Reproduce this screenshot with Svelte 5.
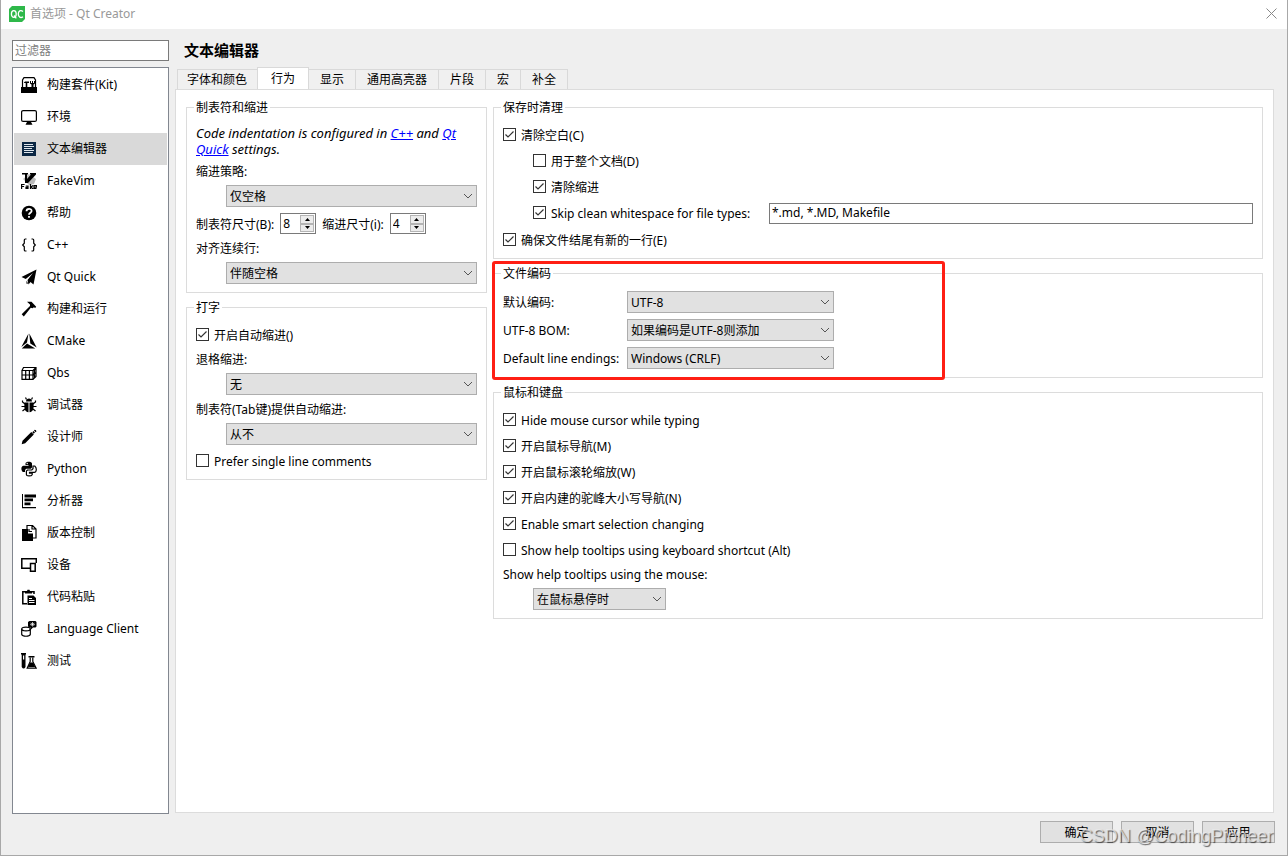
<script>
    const categories = [
        { icon: "kit", name: "构建套件(Kit)" },
        { icon: "screen", name: "环境" },
        { icon: "text", name: "文本编辑器" },
        { icon: "vim", name: "FakeVim" },
        { icon: "help", name: "帮助" },
        { icon: "braces", name: "C++" },
        { icon: "plane", name: "Qt Quick" },
        { icon: "hammer", name: "构建和运行" },
        { icon: "cmake", name: "CMake" },
        { icon: "qbs", name: "Qbs" },
        { icon: "bug", name: "调试器" },
        { icon: "pencil", name: "设计师" },
        { icon: "python", name: "Python" },
        { icon: "analyzer", name: "分析器" },
        { icon: "vcs", name: "版本控制" },
        { icon: "devices", name: "设备" },
        { icon: "paste", name: "代码粘贴" },
        { icon: "client", name: "Language Client" },
        { icon: "flask", name: "测试" },
    ];
    const tabs = ["字体和颜色", "行为", "显示", "通用高亮器", "片段", "宏", "补全"];

    let current = $state(2);
    let tab = $state(1);
    let tabSize = $state(8);
    let indentSize = $state(4);
</script>

{#snippet check(text, checked)}
    <label class="check">
        <span class="tick">
            <input type="checkbox" {checked} />
            <svg viewBox="0 0 13 13"><path d="M2.5 6.5 L5 9 L10.5 3.5" /></svg>
        </span>
        {text}
    </label>
{/snippet}

{#snippet combo(id, options)}
    <span class="combo">
        <select {id}>
            {#each options as option}
                <option>{option}</option>
            {/each}
        </select>
        <svg viewBox="0 0 10 6"><path d="M1 1 L5 5 L9 1" /></svg>
    </span>
{/snippet}

{#snippet arrows(step)}
    <span class="arrows">
        <button aria-label="+" onclick={() => step(1)}><svg viewBox="0 0 5 3"><path d="M0 3 L2.5 0 L5 3Z" /></svg></button>
        <button aria-label="-" onclick={() => step(-1)}><svg viewBox="0 0 5 3"><path d="M0 0 L2.5 3 L5 0Z" /></svg></button>
    </span>
{/snippet}

{#snippet glyph(icon)}
    <svg class="icon" viewBox="0 0 16 16" aria-hidden="true">
        {#if icon == "kit"}
            <path class="line" d="M1.500 11V3L3 .6h10L14.500 3v8" />
            <path d="M0 10h16v6H0zM3 5.500l1-1h4V6H6.300v4H4.700V6H3zM9 4h1v2h1V4h1v2h1V4h1v2.500L12.500 7.500V10h-2V7.500L9 6.500z" />
        {:else if icon == "screen"}
            <rect class="line" x=".6" y="1.600" width="14.800" height="10.800" rx="1.500" />
            <path d="M6 13h4l1.500 2.800h-7z" />
        {:else if icon == "text"}
            <path fill="#0b2744" d="M1 1h14v14H1z" />
            <path stroke="#dfe6ec" d="M3 3.500h9M3 5.500h10M3 7.500h8M3 9.500h10M3 11.500h9" />
        {:else if icon == "vim"}
            <path fill="#bbb" d="M8 1l7 5-2 5-5 1-6-6z" />
            <path d="M1 0h6v1.500H6V6l4-4.500H9V0h6v1.500L7 10H4V1.500H1z" />
            <path class="line" d="M.6 16v-4.500h3M.6 13.500h2.500M4.800 13h2.200v2.500H5V14.300h2M9.500 11v5M12 12.500l-2 1.500 2 2M13 14.200h2.400v-1.700H13v3h2.500" />
        {:else if icon == "help"}
            <circle cx="8" cy="8" r="7.300" />
            <path fill="none" stroke="#fff" stroke-width="1.800" d="M5.500 6.300C5.500 3 10.700 3.200 10.600 6c0 1.700-2.600 1.700-2.600 3.800M8 11v1.800" />
        {:else if icon == "braces"}
            <path class="line" d="M5.500 2H4.300Q3.300 2 3.300 3v3.200L1.700 8l1.600 1.800V13q0 1 1 1h1.200M10.500 2h1.200q1 0 1 1v3.200L14.300 8l-1.600 1.800V13q0 1-1 1h-1.200" />
        {:else if icon == "plane"}
            <path d="M15.500.5L.5 8l4.300 2L12 4 6.500 11l1 4.500 2-2.600 3 2.600zM5.500 11.700v3l1.600-.2z" />
        {:else if icon == "hammer"}
            <path d="M6 .8h4.500l4.700 5-1 1.200-1.300-.8-1.300 1L9.800 6.800 2.800 15.500.7 13.300 9 5V3.500z" />
        {:else if icon == "cmake"}
            <path d="M7.500.5L.3 14 6 9.600zM8.300.5l1 10 6.400 4zM6 10.500L.8 15.500h13.500z" />
        {:else if icon == "qbs"}
            <path class="line" d="M1 5.500h11v8.900H1zM1 5.500l1.500-3h12.500V11.500L12 14.400M12 5.500l3-3M1 10h11M4.700 14V5.500M8.400 14V5.500M13.500 4v9M12 10l3-2.500" />
        {:else if icon == "bug"}
            <path d="M5 4.500C5 .5 11 .5 11 4.500zM3.500 5.500h4v9.700C3.500 15 3 11 3.500 5.500zM8.500 5.500h4c.5 5.500 0 9.500-4 9.700z" />
            <path class="line" d="M5.500 2.500L4.500 .5M10.500 2.500l1-2M4 7L1.500 5V3.500M12 7l2.500-2V3.500M4 9.500H.5M12 9.500h3.500M4 12l-2.500 2M12 12l2.500 2" />
        {:else if icon == "pencil"}
            <path d="M.7 15.300l.8-3.500L10.300 3l2.500 2.500-8.600 8.800zM11.300 3.200l1.200-1.200L14 3.500 12.700 4.700zM13 1.500l.7-.8q1.800.2 1.700 1.700l-.8.8z" />
        {:else if icon == "python"}
            <path d="M4.500 2.500C4.500 0 11 0 11 2.500v4L9.800 7.700H5.300L4 9v2H2C-.6 9 .2 4.700 2.500 4.700h5V4h-3z" />
            <circle cx="6.200" cy="2.500" r=".7" fill="#fff" />
            <path class="line" d="M12 5h1.700c2.500 2 1.800 6.400-.5 6.400H8.500v.8h2.700v1.500c-1 1.700-5.700 1.700-5.800-.2V10l1.100-1h4.300L12 7.700z" />
        {:else if icon == "analyzer"}
            <path d="M1 1h1v13h13v1.200H1zM3.500 1.500H15v3H3.500zM3.500 5.500h8.500v2.700H3.500zM3.500 9.500h6v2.800h-6z" />
        {:else if icon == "vcs"}
            <path d="M1 4h6v4.500h5V16H1z" />
            <path class="line" d="M6 6.500v-6h5.500l3.500 3.500v9h-3M11 .5V4h4M8 4v2.500h3" />
        {:else if icon == "devices"}
            <path class="line wide" d="M9 11.200H.8V1.800h14.500V6M9.500 6.500h4.700v7.700H9.500z" />
        {:else if icon == "paste"}
            <path class="line wide" d="M6 14.800H1.800v-12H13V5" />
            <path d="M4 4.500V2h2L6.500.7h2L9 2h2v2.500zM6.500 6.500h6l2.500 2.500V16H6.500z" />
            <path stroke="#fff" d="M8 9.500h3M8 11.500h5.500M8 13.500h5.500" />
        {:else if icon == "client"}
            <ellipse class="line" cx="5" cy="8" rx="4.300" ry="1.900" />
            <path class="line" d="M.7 8v5.500c1 2.300 7.600 2.300 8.600 0V8" />
            <path d="M8.500 0h6l1 1v4.500l-1 1H12L9.500 9V6.500H8.300L7 5.500V1z" />
            <path stroke="#fff" stroke-width=".7" fill="none" d="M9 3.300h5M11.500 1v4.500M10 1.800l3 3M13 1.800l-3 3" />
        {:else}
            <path d="M0 0h5v1.500H0zM.7 1.500h3.800V14q-1.900 3-3.800 0zM7.500 3h6v1.400h-6z" />
            <path fill="#fff" d="M2 2.500h1.200v4H2z" />
            <path class="line" d="M9.200 4.400v4L6.200 15.200h9L11.800 8.400v-4" />
            <path d="M9 9.500h3.200l2 4.500H7z" />
        {/if}
    </svg>
{/snippet}

<div class="window">
    <header>
        <svg class="logo" viewBox="0 0 16 16" aria-hidden="true">
            <path fill="#2eb84a" d="M3 0h13v13l-3 3H0V3z" />
            <g fill="none" stroke="#fff" stroke-width="1.300">
                <ellipse cx="4.800" cy="8" rx="2.400" ry="3.300" />
                <path d="M5 9.500l2.300 2.800M14 5.500C11.500 3.500 9.300 5 9.300 8s2.200 4.500 4.700 2.700" />
            </g>
        </svg>
        <span>首选项 - Qt Creator</span>
        <button class="close" aria-label="关闭"><svg viewBox="0 0 11 11"><path d="M.5 .5l10 10M10.500 .5l-10 10" /></svg></button>
    </header>

    <div class="body">
        <aside>
            <input class="field filter" type="text" placeholder="过滤器" aria-label="过滤器" />
            <nav>
                {#each categories as category, i}
                    <button class:selected={i == current} onclick={() => current = i}>
                        {@render glyph(category.icon)}
                        {category.name}
                    </button>
                {/each}
            </nav>
        </aside>

        <main>
            <h1>文本编辑器</h1>
            <div class="tabs" role="tablist">
                {#each tabs as name, i}
                    <button role="tab" aria-selected={i == tab} class:active={i == tab} onclick={() => tab = i}>{name}</button>
                {/each}
            </div>

            <div class="pane">
                <div class="column narrow">
                    <fieldset>
                        <legend>制表符和缩进</legend>
                        <p>Code indentation is configured in <a href="#cpp">C++</a> and <a href="#quick">Qt Quick</a> settings.</p>
                        <label for="policy">缩进策略:</label>
                        <div class="indent">{@render combo("policy", ["仅空格", "仅制表符", "混合"])}</div>
                        <div class="row">
                            <label for="tab-size">制表符尺寸(B):</label>
                            <span class="spin">
                                <input id="tab-size" type="number" bind:value={tabSize} />
                                {@render arrows((n) => tabSize += n)}
                            </span>
                            <label for="indent-size">缩进尺寸(i):</label>
                            <span class="spin">
                                <input id="indent-size" type="number" bind:value={indentSize} />
                                {@render arrows((n) => indentSize += n)}
                            </span>
                        </div>
                        <label for="align">对齐连续行:</label>
                        <div class="indent">{@render combo("align", ["伴随空格", "从不"])}</div>
                    </fieldset>

                    <fieldset>
                        <legend>打字</legend>
                        {@render check("开启自动缩进()", true)}
                        <label for="backspace">退格缩进:</label>
                        <div class="indent">{@render combo("backspace", ["无"])}</div>
                        <label for="tab-key">制表符(Tab键)提供自动缩进:</label>
                        <div class="indent">{@render combo("tab-key", ["从不", "总是"])}</div>
                        {@render check("Prefer single line comments", false)}
                    </fieldset>
                </div>

                <div class="column">
                    <fieldset>
                        <legend>保存时清理</legend>
                        {@render check("清除空白(C)", true)}
                        <div class="indent">{@render check("用于整个文档(D)", false)}</div>
                        <div class="indent">{@render check("清除缩进", true)}</div>
                        <div class="indent types">
                            {@render check("Skip clean whitespace for file types:", true)}
                            <input class="field" type="text" value="*.md, *.MD, Makefile" aria-label="Skip clean whitespace for file types" />
                        </div>
                        {@render check("确保文件结尾有新的一行(E)", true)}
                    </fieldset>

                    <div class="marked">
                        <fieldset>
                            <legend>文件编码</legend>
                            <div class="form">
                                <label for="encoding">默认编码:</label>
                                {@render combo("encoding", ["UTF-8", "GBK"])}
                                <label for="bom">UTF-8 BOM:</label>
                                {@render combo("bom", ["如果编码是UTF-8则添加"])}
                                <label for="endings">Default line endings:</label>
                                {@render combo("endings", ["Windows (CRLF)", "Unix (LF)"])}
                            </div>
                        </fieldset>
                        <div class="highlight"></div>
                    </div>

                    <fieldset>
                        <legend>鼠标和键盘</legend>
                        {@render check("Hide mouse cursor while typing", true)}
                        {@render check("开启鼠标导航(M)", true)}
                        {@render check("开启鼠标滚轮缩放(W)", true)}
                        {@render check("开启内建的驼峰大小写导航(N)", true)}
                        {@render check("Enable smart selection changing", true)}
                        {@render check("Show help tooltips using keyboard shortcut (Alt)", false)}
                        <label for="tooltips">Show help tooltips using the mouse:</label>
                        <div class="indent short">{@render combo("tooltips", ["在鼠标悬停时"])}</div>
                    </fieldset>
                </div>
            </div>
        </main>
    </div>

    <footer>
        <button>确定</button>
        <button>取消</button>
        <button>应用</button>
        <span class="watermark">CSDN @CodingPioneer</span>
    </footer>
</div>

<style>
    :global(body) {
        font-family: "Noto Sans", "Noto Sans CJK SC", sans-serif;
        font-size: 12px;
        line-height: 16px;
        color: #000;
    }

    .window, .window * {
        box-sizing: border-box;
    }

    .window {
        display: flex;
        flex-direction: column;
        min-height: 100vh;
        background: #efefef;
        border: 1px solid #a8a8a8;
        border-top: none;
    }

    button, input, select {
        font: inherit;
        color: inherit;
        margin: 0;
        border-radius: 0;
        outline: none;
    }

    header {
        display: flex;
        align-items: center;
        gap: 5px;
        height: 29px;
        padding: 0 10px 2px 8px;
        background: #fff;
        color: #999;
    }

    .logo {
        width: 16px;
        height: 16px;
    }

    .close {
        display: flex;
        margin-left: auto;
        padding: 0;
        border: none;
        background: none;
    }

    .close svg {
        width: 11px;
        height: 11px;
        fill: none;
        stroke: #888;
    }

    .body {
        flex: 1;
        display: flex;
        gap: 6px;
        padding: 11px 13px 0 11px;
    }

    aside {
        flex: 0 0 157px;
        display: flex;
        flex-direction: column;
        gap: 6px;
    }

    .field {
        width: 100%;
        height: 21px;
        padding: 0 2px 2px;
        border: 1px solid #7a7a7a;
        background: #fff;
    }

    .filter {
        padding: 0 2px;
    }

    .field::placeholder {
        color: #808080;
    }

    nav {
        flex: 1;
        padding: 1px;
        border: 1px solid #828790;
        background: #fff;
    }

    nav button {
        display: flex;
        align-items: center;
        gap: 10px;
        width: 100%;
        height: 32px;
        padding: 0 7px;
        border: none;
        background: none;
        white-space: nowrap;
    }

    nav button.selected {
        background: #d9d9d9;
    }

    .icon {
        flex: none;
        width: 16px;
        height: 16px;
    }

    .icon .line {
        fill: none;
        stroke: #000;
        stroke-width: 1.2;
    }

    .icon .wide {
        stroke-width: 1.5;
    }

    main {
        flex: 1;
        min-width: 0;
        display: flex;
        flex-direction: column;
        padding-bottom: 1px;
    }

    h1 {
        margin: 0;
        padding: 0 9px;
        font-size: 15px;
        line-height: 20px;
    }

    .tabs {
        display: flex;
        align-items: flex-end;
        padding: 7px 2px 0;
        margin-bottom: -1px;
    }

    .tabs button {
        height: 21px;
        padding: 0 11px;
        border: 1px solid #d9d9d9;
        border-left: none;
        background: #f0f0f0;
    }

    .tabs button:first-child {
        padding: 0 10px 0 9px;
        border-left: 1px solid #d9d9d9;
        border-right: none;
    }

    .tabs button.active {
        height: 23px;
        padding: 0 13px;
        border-left: 1px solid #d9d9d9;
        border-bottom-color: #fff;
        background: #fff;
    }

    .pane {
        flex: 1;
        display: flex;
        align-items: flex-start;
        gap: 6px;
        padding: 9px 10px;
        border: 1px solid #dcdcdc;
        background: #fff;
    }

    .column {
        flex: 1;
        min-width: 0;
        display: flex;
        flex-direction: column;
        gap: 6px;
    }

    .column.narrow {
        flex: 0 0 301px;
    }

    fieldset {
        display: flex;
        flex-direction: column;
        gap: 6px;
        min-width: 0;
        margin: 0;
        padding: 9px 9px 8px;
        border: 1px solid #dcdcdc;
    }

    legend {
        height: 17px;
        margin-left: -2px;
        padding: 0 2px;
        line-height: 18px;
    }

    label {
        height: 16px;
        line-height: 18px;
    }

    p {
        margin: 0;
        font-size: 13px;
        font-style: italic;
    }

    a {
        color: #00f;
    }

    .indent {
        margin-left: 30px;
    }

    .short {
        width: 133px;
    }

    .row {
        display: flex;
        align-items: center;
        gap: 6px;
        white-space: nowrap;
    }

    .types {
        display: grid;
        grid-template-columns: 226px 1fr;
        gap: 10px;
        white-space: nowrap;
    }

    .check {
        display: flex;
        align-items: flex-start;
        gap: 5px;
        height: 20px;
        padding-top: 3px;
        line-height: 16px;
    }

    .tick {
        position: relative;
        width: 13px;
        height: 13px;
    }

    .tick input {
        display: block;
        appearance: none;
        width: 13px;
        height: 13px;
        border: 1px solid #333;
        background: #fff;
    }

    .tick svg {
        position: absolute;
        inset: 0;
        fill: none;
        stroke: #333;
        stroke-width: 1.2;
        pointer-events: none;
        visibility: hidden;
    }

    .tick input:checked + svg {
        visibility: visible;
    }

    .combo {
        position: relative;
        display: block;
    }

    .combo select {
        display: block;
        appearance: none;
        width: 100%;
        height: 22px;
        padding: 2px 20px 0 3px;
        border: 1px solid #adadad;
        background: #e1e1e1;
    }

    .combo svg {
        position: absolute;
        right: 4px;
        top: 8px;
        width: 10px;
        height: 6px;
        fill: none;
        stroke: #555;
        pointer-events: none;
    }

    .spin {
        display: flex;
        width: 36px;
        height: 21px;
        padding: 1px;
        border: 1px solid #7a7a7a;
        background: #fff;
    }

    .spin input {
        flex: 1;
        min-width: 0;
        padding: 0 1px;
        border: none;
        appearance: textfield;
    }

    .spin input::-webkit-inner-spin-button {
        display: none;
    }

    .arrows {
        display: flex;
        flex-direction: column;
        width: 14px;
    }

    .arrows button {
        flex: 1;
        display: flex;
        align-items: center;
        justify-content: center;
        padding: 0;
        border: 1px solid #b4b4b4;
        background: #ececec;
    }

    .arrows svg {
        width: 5px;
        height: 3px;
    }

    .marked {
        position: relative;
    }

    .form {
        display: grid;
        grid-template-columns: 118px 207px;
        align-items: center;
        gap: 6px;
        white-space: nowrap;
    }

    .highlight {
        position: absolute;
        left: -1px;
        top: -4px;
        width: 453px;
        height: 119px;
        border: 3px solid #ff1f14;
        border-radius: 3px;
        pointer-events: none;
    }

    footer {
        position: relative;
        display: flex;
        justify-content: flex-end;
        gap: 8px;
        padding: 7px 12px 12px;
    }

    footer button {
        width: 73px;
        height: 22px;
        padding: 2px 0 0;
        border: 1px solid #adadad;
        background: #e1e1e1;
    }

    .watermark {
        position: absolute;
        right: 14px;
        bottom: 8px;
        font-family: "Liberation Sans", Arial, sans-serif;
        font-size: 18px;
        line-height: 22px;
        color: rgba(240, 240, 240, 0.7);
        text-shadow: 1px 1px 1px rgba(0, 0, 0, 0.6);
        pointer-events: none;
    }
</style>
